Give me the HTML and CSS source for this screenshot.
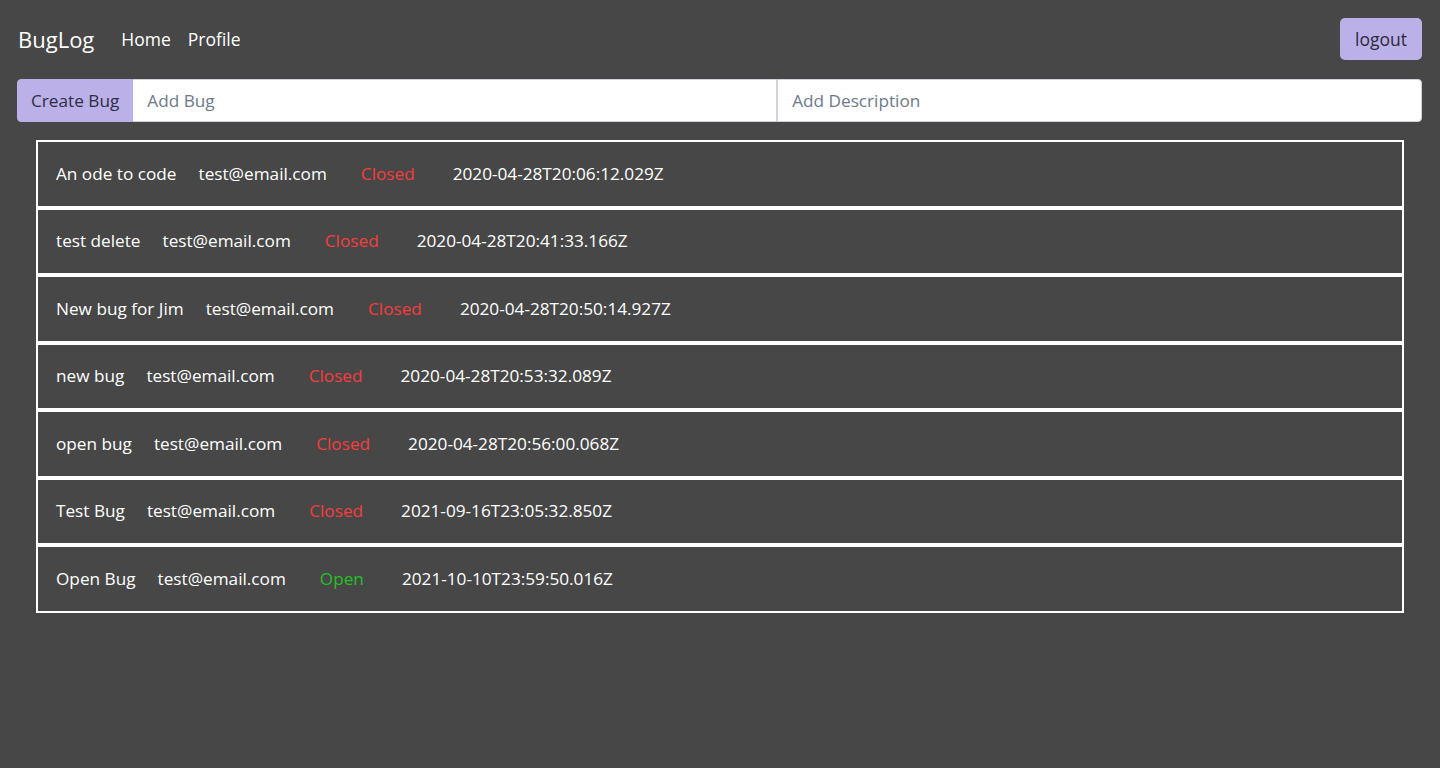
FILE: index.html
```html
<!DOCTYPE html>
<html>
<head>
<meta charset="utf-8">
<title>BugLog</title>
<link rel="stylesheet" href="styles.css">
</head>
<body>
<nav class="navbar">
  <a class="brand">BugLog</a>
  <a class="nav-link">Home</a>
  <a class="nav-link">Profile</a>
  <button class="btn-logout">logout</button>
</nav>
<form class="input-group">
  <button type="button" class="prepend">Create Bug</button>
  <input class="field" placeholder="Add Bug">
  <input class="field field-last" placeholder="Add Description">
</form>
<ul class="bug-list">
  <li class="bug"><span class="title">An ode to code</span><span class="email">test@email.com</span><span class="status closed">Closed</span><span class="date">2020-04-28T20:06:12.029Z</span></li>
  <li class="bug"><span class="title">test delete</span><span class="email">test@email.com</span><span class="status closed">Closed</span><span class="date">2020-04-28T20:41:33.166Z</span></li>
  <li class="bug"><span class="title">New bug for Jim</span><span class="email">test@email.com</span><span class="status closed">Closed</span><span class="date">2020-04-28T20:50:14.927Z</span></li>
  <li class="bug"><span class="title">new bug</span><span class="email">test@email.com</span><span class="status closed">Closed</span><span class="date">2020-04-28T20:53:32.089Z</span></li>
  <li class="bug"><span class="title">open bug</span><span class="email">test@email.com</span><span class="status closed">Closed</span><span class="date">2020-04-28T20:56:00.068Z</span></li>
  <li class="bug"><span class="title">Test Bug</span><span class="email">test@email.com</span><span class="status closed">Closed</span><span class="date">2021-09-16T23:05:32.850Z</span></li>
  <li class="bug"><span class="title">Open Bug</span><span class="email">test@email.com</span><span class="status open">Open</span><span class="date">2021-10-10T23:59:50.016Z</span></li>
</ul>
</body>
</html>
```
FILE: styles.css
```css
* { box-sizing: border-box; }
html, body { margin: 0; padding: 0; }
body {
  background: #474747;
  color: #ffffff;
  font-family: "Open Sans", "Noto Sans", sans-serif;
  font-size: 17.2px;
  line-height: 24px;
  height: 768px;
}
.navbar {
  display: flex;
  align-items: center;
  padding: 18px 18px 0 18px;
  height: 60px;
}
.brand {
  font-size: 22px;
  margin-right: 27px;
}
.nav-link {
  font-size: 17.5px;
  margin-right: 17px;
}
.btn-logout {
  margin-left: auto;
  height: 42px;
  padding: 0 15px;
  background: #bbb0e7;
  border: none;
  border-radius: 5px;
  color: #2d2a3a;
  font-family: inherit;
  font-size: 17.5px;
}
.input-group {
  display: flex;
  margin: 19px 18px 0 17px;
  height: 43px;
}
.prepend {
  background: #bbb0e7;
  color: #2e2d45;
  border: 1px solid #bbb0e7;
  border-radius: 4px 0 0 4px;
  padding: 0 13px;
  font-family: inherit;
  font-size: 17.2px;
}
.field {
  flex: 1;
  border: 1px solid #ced4da;
  border-left: none;
  padding: 0 14px;
  font-family: inherit;
  font-size: 17.2px;
  color: #495057;
  background: #fff;
}
.field::placeholder { color: #6c7a89; }
.field-last {
  border-left: 1px solid #ced4da;
  border-radius: 0 4px 4px 0;
}
.bug-list {
  list-style: none;
  margin: 18px 36px 0 36px;
  padding: 0;
}
.bug {
  border: 2px solid #ffffff;
  padding: 19.75px 18px;
  display: flex;
}
.title { margin-right: 22px; }
.email { margin-right: 34px; }
.status { margin-right: 38px; }
.closed { color: #f63d3d; }
.open { color: #25c025; }
```
